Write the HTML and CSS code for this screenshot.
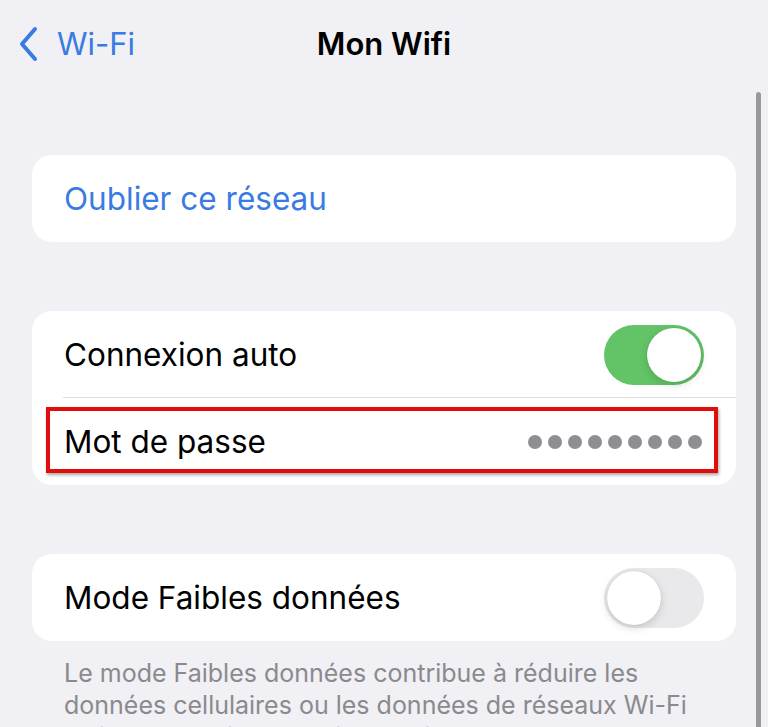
FILE: index.html
```html
<!DOCTYPE html>
<html>
<head>
  <title>Mon Wifi</title>
  <link rel="stylesheet" href="styles.css">
</head>
<body>
  <div class="nav">
    <a class="back" href="#">
      <svg class="chevron" width="22" height="36" viewBox="0 0 22 36">
        <path d="M18 3 L5 18 L18 33" fill="none" stroke="#3a7be2" stroke-width="4" stroke-linecap="round" stroke-linejoin="round"/>
      </svg>
      <span>Wi-Fi</span>
    </a>
    <h1 class="title">Mon Wifi</h1>
    <div></div>
  </div>

  <div class="content">
    <div class="group">
      <div class="row"><span class="link">Oublier ce réseau</span></div>
    </div>

    <div class="group">
      <div class="row">
        <span>Connexion auto</span>
        <span class="switch on"><span class="knob"></span></span>
      </div>
      <div class="row highlighted">
        <span>Mot de passe</span>
        <span class="dots">
          <i></i><i></i><i></i><i></i><i></i><i></i><i></i><i></i><i></i>
        </span>
        <span class="mark"></span>
      </div>
    </div>

    <div class="group">
      <div class="row">
        <span>Mode Faibles données</span>
        <span class="switch"><span class="knob"></span></span>
      </div>
    </div>
    <p class="footnote">Le mode Faibles données contribue à réduire les données cellulaires ou les données de réseaux Wi-Fi spécifiques sélectionnés utilisées par l'iPhone.</p>
  </div>

  <div class="scrollbar"></div>
</body>
</html>
```

FILE: styles.css
```css
body {
  margin: 0;
  background-color: #f0f0f5;
  font-family: Inter, "Noto Sans", sans-serif;
  color: #000;
  overflow: hidden;
}
.nav {
  height: 87px;
  display: grid;
  grid-template-columns: 1fr auto 1fr;
  align-items: center;
}
.back {
  display: flex;
  align-items: center;
  gap: 18px;
  padding-left: 17px;
  color: #3a7be2;
  text-decoration: none;
  font-size: 31px;
}
.title {
  margin: 0;
  font-size: 31px;
  font-weight: 600;
}
.content {
  padding: 0 32px;
}
.group {
  margin-top: 68px;
  background-color: #fff;
  border-radius: 20px;
  overflow: hidden;
}
.group + .group {
  margin-top: 69px;
}
.row {
  position: relative;
  height: 87px;
  display: flex;
  align-items: center;
  justify-content: space-between;
  padding: 0 32px;
  font-size: 31.5px;
}
.row + .row::before {
  content: "";
  position: absolute;
  top: -1px;
  left: 31px;
  right: 0;
  height: 1px;
  background-color: #dedee2;
}
.link {
  color: #3a7be2;
}
.switch {
  width: 100px;
  height: 60px;
  border-radius: 30px;
  background-color: #e9e9eb;
  position: relative;
  box-sizing: border-box;
}
.switch .knob {
  position: absolute;
  top: 3px;
  left: 3px;
  width: 54px;
  height: 54px;
  border-radius: 50%;
  background-color: #fff;
  box-shadow: 0 3px 8px rgba(0, 0, 0, 0.15), 0 0 1px rgba(0, 0, 0, 0.2);
}
.switch.on {
  background-color: #62c466;
}
.switch.on .knob {
  left: 43px;
}
.dots {
  display: flex;
  gap: 6px;
  margin-right: 2px;
}
.dots i {
  width: 14px;
  height: 14px;
  border-radius: 50%;
  background-color: #8e8e93;
}
.mark {
  position: absolute;
  top: 9px;
  left: 14px;
  right: 18px;
  bottom: 12px;
  border: 4px solid #e10c0c;
  box-shadow: 1px 2px 3px rgba(0, 0, 0, 0.35);
}
.footnote {
  margin: 16px 0 0;
  padding: 0 32px;
  font-size: 25px;
  line-height: 32px;
  color: #8a8a8e;
}
.scrollbar {
  position: absolute;
  top: 92px;
  left: 756px;
  width: 5px;
  height: 700px;
  border-radius: 3px;
  background-color: #98989d;
}
```
